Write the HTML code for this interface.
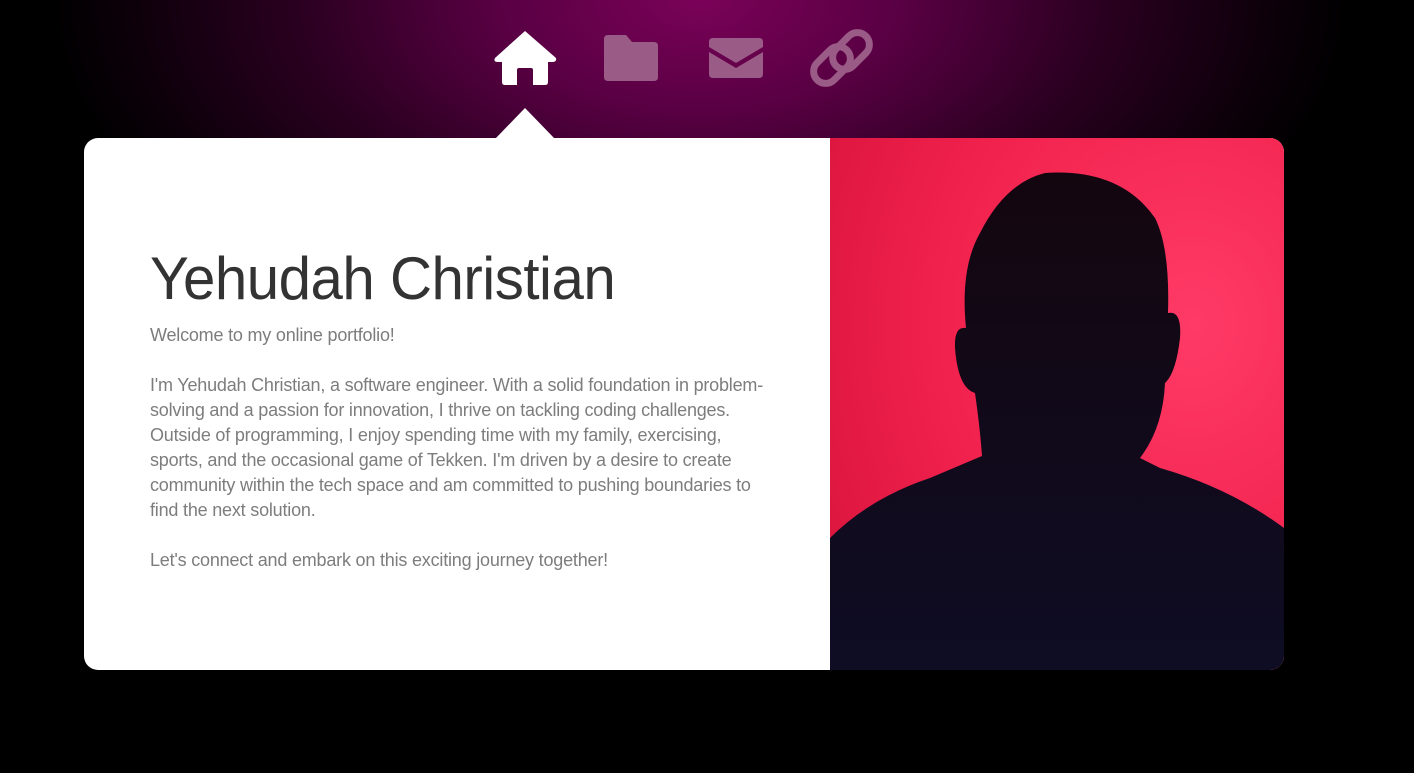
<!DOCTYPE html>
<html><head><meta charset="utf-8"><style>
html,body{margin:0;padding:0}
body{width:1414px;height:773px;overflow:hidden;position:relative;font-family:"Liberation Sans",sans-serif;
background:radial-gradient(ellipse 650px 360px at 700px 0px,#7a0258 0%,#5a0044 30%,#2a0020 62%,#0a0008 90%,#000 100%),#000;}
.nav{position:absolute;top:0;left:0}
.card{position:absolute;left:84px;top:138px;width:1200px;height:532px;border-radius:14px;overflow:hidden;background:#fff}
.tri{position:absolute;left:495px;top:108px;width:0;height:0;border-left:30px solid transparent;border-right:30px solid transparent;border-bottom:31px solid #fff}
h1{position:absolute;left:150px;top:244px;margin:0;font-weight:normal;font-size:60px;color:#333;white-space:nowrap;transform:scaleX(0.97);transform-origin:left;letter-spacing:-0.5px}
.t{position:absolute;left:150px;color:#7d7d7d;font-size:18px;line-height:25px;white-space:nowrap;letter-spacing:-0.2px}
.photo{position:absolute;left:830px;top:138px;width:454px;height:532px;border-radius:0 14px 14px 0;overflow:hidden}
</style></head><body>
<svg class="nav" width="1414" height="110">
 <g fill="#fff">
  <path d="M525 31 L556 58 Q557 62 552 62 L548 62 L548 82 Q548 85 545 85 L533 85 L533 70 Q533 68 531 68 L519 68 Q517 68 517 70 L517 85 L505 85 Q502 85 502 82 L502 62 L498 62 Q493 62 495 58 Z"/>
 </g>
 <g fill="#9a5b86">
  <path d="M608 35 L626 35 L632 42 L654 42 Q658 42 658 46 L658 77 Q658 81 654 81 L608 81 Q604 81 604 77 L604 39 Q604 35 608 35Z"/>
  <path d="M713 38 L759 38 Q763 38 763 42 L763 47 L736 63 L709 47 L709 42 Q709 38 713 38Z M709 52 L736 68 L763 52 L763 74 Q763 78 759 78 L713 78 Q709 78 709 74Z"/>
 </g>
 <g fill="none" stroke="#9a5b86" stroke-width="7">
  <rect x="811" y="53" width="42" height="24" rx="12" transform="rotate(-45 832 65)"/>
  <rect x="830" y="39" width="42" height="24" rx="12" transform="rotate(-45 851 51)"/>
 </g>
</svg>
<div class="tri"></div>
<div class="card"></div>
<h1>Yehudah Christian</h1>
<div class="t" style="top:323px">Welcome to my online portfolio!</div>
<div class="t" style="top:373px">I'm Yehudah Christian, a software engineer. With a solid foundation in problem-</div>
<div class="t" style="top:398px">solving and a passion for innovation, I thrive on tackling coding challenges.</div>
<div class="t" style="top:423px">Outside of programming, I enjoy spending time with my family, exercising,</div>
<div class="t" style="top:448px">sports, and the occasional game of Tekken. I'm driven by a desire to create</div>
<div class="t" style="top:473px">community within the tech space and am committed to pushing boundaries to</div>
<div class="t" style="top:498px">find the next solution.</div>
<div class="t" style="top:548px">Let's connect and embark on this exciting journey together!</div>
<div class="photo">
<svg width="454" height="532">
 <defs>
  <radialGradient id="bg" cx="0.8" cy="0.35" r="0.9">
   <stop offset="0" stop-color="#ff3a66"/><stop offset="0.6" stop-color="#f2224e"/><stop offset="1" stop-color="#dc163f"/>
  </radialGradient>
  <linearGradient id="sh" x1="0" y1="0" x2="0" y2="1">
   <stop offset="0" stop-color="#14060f"/><stop offset="1" stop-color="#0e0d24"/>
  </linearGradient>
 </defs>
 <rect width="454" height="532" fill="url(#bg)"/>
 <path fill="url(#sh)" d="M215 35 Q290 30 325 80 Q340 110 338 175 Q352 172 350 200 Q346 235 335 245 Q333 290 310 320 L330 330 Q400 350 454 390 L454 532 L0 532 L0 400 Q40 360 100 340 L152 318 Q150 290 145 255 Q128 250 125 210 Q124 188 136 190 Q130 130 150 95 Q175 45 215 35Z"/>
</svg>
</div>
</body></html>
